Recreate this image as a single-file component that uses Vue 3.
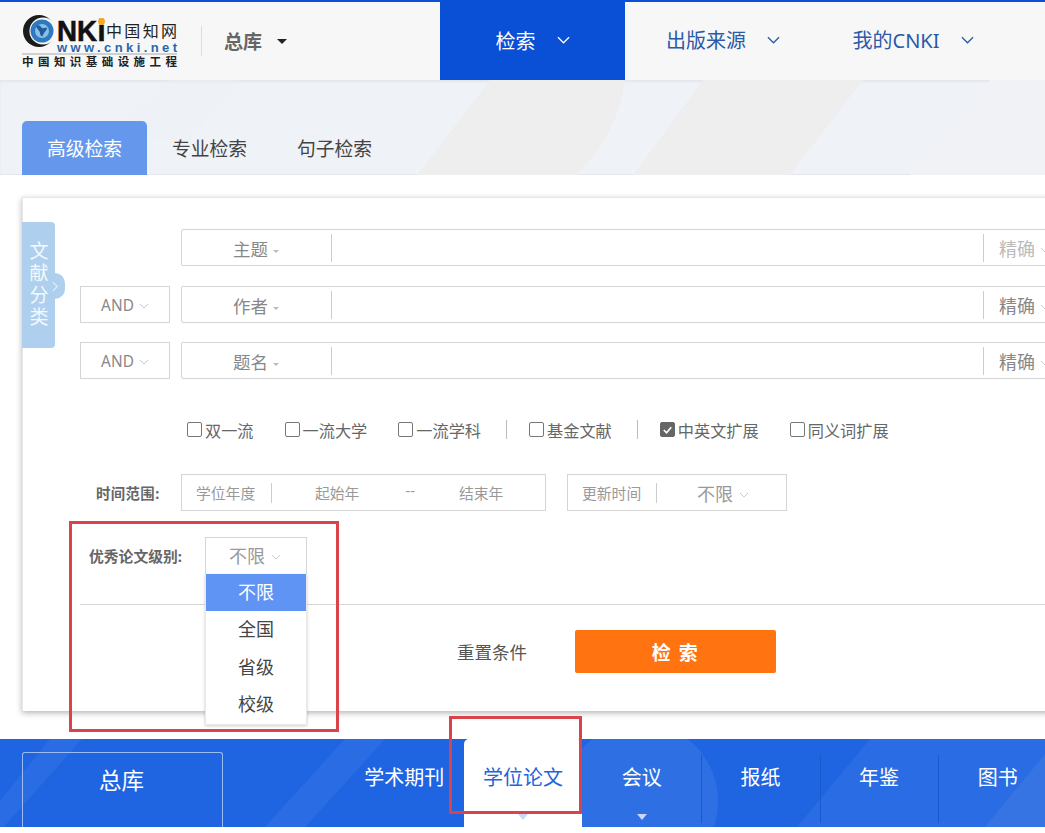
<template>
  <div class="page">
    <header class="topbar">
      <div class="brand">
        <svg class="logo" viewBox="0 0 156 50" width="156" height="50">
          <circle cx="17" cy="14" r="16" fill="#1b1b1b" />
          <circle cx="21" cy="14" r="13.6" fill="#f7f7f7" />
          <circle cx="20" cy="14" r="11.5" fill="#2f79bf" />
          <circle cx="20" cy="14" r="7" fill="#8cbde6" />
          <path d="M14 9c3-2 5 1 6 2s4-1 5 0-3 4-4 7-3 0-3-2-3-4-4-7z" fill="#1e5c9a" />
          <text x="35" y="24" class="logo-nki" textLength="40" lengthAdjust="spacingAndGlyphs">NK</text>
          <text x="75.5" y="24" class="logo-nki">i</text>
          <circle cx="79.5" cy="4.5" r="3.4" fill="#f5a623" />
          <text x="84" y="20" class="logo-cn" textLength="71" lengthAdjust="spacing">中国知网</text>
          <text x="35" y="34.5" class="logo-url" textLength="120" lengthAdjust="spacing">www.cnki.net</text>
          <path d="M0 37H155" stroke="#aaa" stroke-width="1" />
          <text x="0" y="48.5" class="logo-sub" textLength="155" lengthAdjust="spacing">中国知识基础设施工程</text>
        </svg>
        <span class="brand-sep"></span>
        <span class="brand-lib">总库</span>
        <span class="caret"></span>
      </div>
      <nav class="topnav">
        <a v-for="n in topNav" :key="n.text" class="topnav-item" :class="{ on: n.on }" :style="{ width: n.width + 'px' }">
          <span>{{ n.text }}</span>
          <svg viewBox="0 0 14 8" width="13" height="8"><path d="M1 1l6 6 6-6" fill="none" stroke="currentColor" stroke-width="1.4" /></svg>
        </a>
      </nav>
    </header>

    <div class="band">
      <svg class="band-bg" viewBox="0 0 1045 95" width="1045" height="95">
        <path d="M100 60L170 0H240L190 60Z" fill="#edeef0" opacity="0.4" />
        <path d="M417 95L490 0H625Q620 50 577 95Z" fill="#eeeeef" />
        <path d="M633 95L703 0H863L790 95Z" fill="#eeeeef" />
        <path d="M910 95L923 75L990 0H1045V95Z" fill="#f0f2f5" />
      </svg>
      <div v-for="(t, i) in tabs" :key="t" class="tab" :class="{ on: i === 0 }">{{ t }}</div>
    </div>

    <main class="main">
      <section class="card">
        <div class="side-tab">
          <span class="side-text">文献分类</span>
          <i class="side-knob"><svg viewBox="0 0 8 12" width="7" height="11"><path d="M1 1l5 5-5 5" fill="none" stroke="#dcebf8" stroke-width="1.5" /></svg></i>
        </div>

        <div class="rows">
          <div v-for="(r, i) in rows" :key="r.field" class="row">
            <div v-if="i > 0" class="logic">AND<svg class="chev" viewBox="0 0 10 6" width="10" height="6"><path d="M1 1l4 4 4-4" fill="none" stroke="#ccc" /></svg></div>
            <div class="field">
              <div class="field-name">{{ r.field }}<i class="mini-caret"></i></div>
              <div class="field-input"></div>
              <div class="field-match" :class="{ dim: i === 0 }">精确<svg class="chev" viewBox="0 0 10 6" width="10" height="6"><path d="M1 1l4 4 4-4" fill="none" stroke="#ccc" /></svg></div>
            </div>
          </div>
        </div>

        <div class="checks">
          <template v-for="c in checks" :key="c.text">
            <i v-if="c.sep" class="check-sep"></i>
            <label class="check">
              <span class="box" :class="{ checked: c.on }">
                <svg v-if="c.on" viewBox="0 0 14 14" width="14" height="14"><path d="M3 7l3 3 5-6" fill="none" stroke="#fff" stroke-width="1.8" /></svg>
              </span>
              {{ c.text }}
            </label>
          </template>
        </div>

        <div class="time-row">
          <span class="label">时间范围:</span>
          <div class="time-box">
            <span class="time-type">学位年度</span>
            <span class="time-start">起始年</span>
            <span class="time-dash">--</span>
            <span class="time-end">结束年</span>
          </div>
          <div class="update-box">
            <span class="time-type">更新时间</span>
            <span class="update-val">不限<svg class="chev" viewBox="0 0 10 6" width="10" height="6"><path d="M1 1l4 4 4-4" fill="none" stroke="#ccc" /></svg></span>
          </div>
        </div>

        <div class="level-row">
          <span class="level-label">优秀论文级别:</span>
          <div class="level-select">
            <div class="level-val">不限<svg class="chev" viewBox="0 0 10 6" width="10" height="6"><path d="M1 1l4 4 4-4" fill="none" stroke="#ccc" /></svg></div>
            <ul class="level-menu">
              <li v-for="(o, i) in levels" :key="o" :class="{ on: i === 0 }">{{ o }}</li>
            </ul>
          </div>
        </div>

        <div class="actions">
          <span class="reset">重置条件</span>
          <button class="search-btn">检 索</button>
        </div>
      </section>
    </main>

    <footer class="dbbar">
      <svg class="db-bg" viewBox="0 0 1045 88" width="1045" height="88">
        <path d="M0 62L50 0H82L0 92Z" fill="#fff" opacity="0.05" />
        <path d="M265 88L345 0H385L305 88Z" fill="#fff" opacity="0.05" />
        <circle cx="640" cy="62" r="78" fill="#fff" opacity="0.07" />
        <path d="M797 88L870 0H1045V88Z" fill="#fff" opacity="0.05" />
        <path d="M985 88L1045 15V88Z" fill="#fff" opacity="0.06" />
      </svg>
      <div class="db-all">总库</div>
      <div class="db-list">
        <div v-for="d in dbs" :key="d.text" class="db-item" :class="{ on: d.on, line: d.line }">
          {{ d.text }}
          <i v-if="d.arrow" class="db-arrow"></i>
        </div>
      </div>
    </footer>

    <div class="mark mark-level"></div>
    <div class="mark mark-tab"></div>
  </div>
</template>

<script setup>
const topNav = [
  { text: '检索', on: true, width: 185 },
  { text: '出版来源', width: 196 },
  { text: '我的CNKI', width: 184 }
]
const tabs = ['高级检索', '专业检索', '句子检索']
const rows = [{ field: '主题' }, { field: '作者' }, { field: '题名' }]
const checks = [
  { text: '双一流' },
  { text: '一流大学' },
  { text: '一流学科' },
  { text: '基金文献', sep: true },
  { text: '中英文扩展', sep: true, on: true },
  { text: '同义词扩展' }
]
const levels = ['不限', '全国', '省级', '校级']
const dbs = [
  { text: '学术期刊' },
  { text: '学位论文', on: true, arrow: true },
  { text: '会议', arrow: true },
  { text: '报纸', line: true },
  { text: '年鉴', line: true },
  { text: '图书', line: true }
]
</script>

<style>
html, body { margin: 0; background: #fff; }
</style>

<style scoped>
.page {
  position: relative;
  width: 1045px;
  height: 833px;
  overflow: hidden;
  background: #fff;
  color: #333;
  font-family: "Noto Sans", "Noto Sans CJK SC", sans-serif;
}

/* top */
.topbar { position: relative; z-index: 1; display: flex; height: 78px; border-top: 2px solid #0a50d6; background: #f7f7f7; }
.brand { display: flex; align-items: center; width: 418px; padding-left: 22px; }
.logo { flex: none; width: 156px; margin-top: 1px; overflow: visible; }
.logo-nki { font: 700 29px "Liberation Sans", sans-serif; fill: #111; stroke: #111; stroke-width: 0.6px; }
.logo-cn { font: 16px "Noto Sans CJK SC", sans-serif; fill: #222; }
.logo-url { font: 700 13px "Liberation Sans", sans-serif; fill: #2a66ab; }
.logo-sub { font: 700 11.5px "Noto Sans CJK SC", sans-serif; fill: #222; }
.brand-sep { width: 1px; height: 30px; background: #ddd; margin: 0 22px 0 23px; }
.brand-lib { font-size: 19px; font-weight: 700; color: #666; }
.caret { margin-left: 15px; border: 5px solid transparent; border-top-color: #222; border-bottom: 0; }
.topnav { display: flex; }
.topnav-item { display: flex; align-items: center; justify-content: center; gap: 21px; padding-bottom: 3px; box-sizing: border-box; font-size: 20px; color: #2a5aa8; }
.topnav-item.on { background: #0a50d6; color: #fff; margin-top: -2px; padding-bottom: 0; }

/* tabs */
.band {
  position: relative;
  display: flex;
  align-items: flex-end;
  height: 95px;
  box-sizing: border-box;
  padding-left: 22px;
  background: #eff3f8;
  box-shadow: inset 0 -1px 0 #e4e6ea, inset 0 2px 3px rgba(0, 0, 0, 0.05);
}
.band-bg { position: absolute; left: 0; top: 0; }
.tab { position: relative; width: 125px; height: 54px; line-height: 56px; text-align: center; font-size: 18.8px; color: #444; }
.tab.on { background: #6598ec; color: #fff; border-radius: 5px 5px 0 0; }

/* form */
.main { padding: 22px 0 28px 22px; height: 564px; box-sizing: border-box; }
.card {
  position: relative;
  width: 1100px;
  height: 514px;
  box-sizing: border-box;
  padding: 31px 0 0 57px;
  background: #fff;
  border-top: 1px solid #e8e8e8;
  border-left: 1px solid #e8e8e8;
  box-shadow: 0 2px 6px rgba(0, 0, 0, 0.3);
}
.side-tab {
  position: absolute;
  left: -1px;
  top: 24px;
  display: flex;
  align-items: center;
  justify-content: center;
  width: 33px;
  height: 126px;
  background: #aed0ee;
  border-radius: 0 4px 4px 0;
  color: #f4f9fd;
}
.side-text { writing-mode: vertical-rl; font-size: 19px; letter-spacing: 3px; line-height: 33px; margin-right: 3px; }
.side-knob {
  position: absolute;
  right: -10px;
  top: 51px;
  display: flex;
  align-items: center;
  width: 10px;
  height: 26px;
  background: #aed0ee;
  border-radius: 0 13px 13px 0;
}
.side-knob svg { margin-left: -3px; }
.rows { display: flex; flex-direction: column; gap: 20px; }
.row { display: flex; justify-content: flex-end; gap: 11px; width: 1021px; height: 37px; }
.row:last-child { margin-top: -1px; }
.logic {
  width: 90px;
  box-sizing: border-box;
  border: 1px solid #d5d5d5;
  display: flex;
  align-items: center;
  justify-content: center;
  gap: 5px;
  padding-top: 2px;
  font-size: 15.4px;
  color: #888;
}
.field {
  display: flex;
  align-items: center;
  width: 920px;
  box-sizing: border-box;
  border: 1px solid #d5d5d5;
  border-radius: 2px;
}
.field-name {
  width: 150px;
  height: 28px;
  line-height: 30px;
  box-sizing: border-box;
  border-right: 1px solid #ccc;
  padding-left: 51px;
  font-size: 17.5px;
  color: #888;
}
.mini-caret {
  display: inline-block;
  margin-left: 5px;
  vertical-align: 3px;
  border: 3.5px solid transparent;
  border-top-color: #bbb;
  border-bottom: 0;
}
.field-input { flex: 1; }
.field-match {
  width: 117px;
  height: 28px;
  line-height: 30px;
  box-sizing: border-box;
  border-left: 1px solid #ccc;
  padding-left: 15px;
  font-size: 18px;
  color: #888;
}
.field-match .chev { margin-left: 5px; vertical-align: 3px; }
.field-match.dim { color: #bbb; }

.checks { display: flex; align-items: center; height: 21px; margin: 40px 0 0 107px; font-size: 16.2px; color: #666; white-space: nowrap; }
.check { display: flex; align-items: center; gap: 3px; margin-right: 31px; }
.box { width: 15px; height: 15px; box-sizing: border-box; border: 1px solid #777; border-radius: 2px; display: flex; }
.box.checked { background: #666; border-color: #666; }
.check-sep { width: 1px; height: 19px; background: #bbb; margin: 0 22px 0 -6px; }

.time-row { display: flex; align-items: center; height: 37px; margin-top: 34px; }
.label { width: 101px; padding-left: 16px; box-sizing: border-box; font-size: 14.4px; letter-spacing: 0.4px; font-weight: 700; color: #666; white-space: nowrap; }
.time-box, .update-box {
  display: flex;
  align-items: center;
  box-sizing: border-box;
  height: 37px;
  border: 1px solid #d5d5d5;
  font-size: 14.8px;
  color: #999;
}
.time-box { width: 365px; }
.update-box { width: 220px; margin-left: 21px; }
.time-type { width: 90px; padding-left: 14px; box-sizing: border-box; position: relative; flex: none; }
.time-type::after { content: ""; position: absolute; right: 0; top: 1px; height: 20px; width: 1px; background: #ccc; }
.time-start { margin-left: 43px; }
.time-dash { margin: -6px 0 0 46px; }
.time-end { margin-left: 44px; }
.update-box .time-type { width: 89px; }
.update-val { margin-left: 40px; font-size: 18px; }
.update-val .chev { margin-left: 6px; vertical-align: 3px; }

.level-row { display: flex; align-items: flex-start; height: 67px; margin-top: 26px; border-bottom: 1px solid #d8d8d8; }
.level-label { width: 125px; padding: 8px 0 0 9px; box-sizing: border-box; font-size: 14.8px; font-weight: 700; color: #666; white-space: nowrap; }
.level-select { position: relative; width: 102px; z-index: 2; }
.level-val {
  height: 37px;
  line-height: 37px;
  box-sizing: border-box;
  border: 1px solid #d5d5d5;
  border-bottom: 0;
  padding-left: 23px;
  font-size: 18px;
  color: #999;
  background: #fff;
}
.level-val .chev { margin-left: 6px; vertical-align: 3px; }
.level-menu {
  position: absolute;
  left: 0;
  top: 37px;
  width: 102px;
  box-sizing: border-box;
  margin: 0;
  padding: 0 0 1px;
  list-style: none;
  background: #fff;
  border: 1px solid #e8e8e8;
  border-top: 0;
  box-shadow: 0 1px 3px rgba(0, 0, 0, 0.2);
}
.level-menu li { height: 37.3px; line-height: 37px; text-align: center; font-size: 18px; color: #444; }
.level-menu li.on { background: #5f94f5; color: #fff; }

.actions { display: flex; align-items: center; margin: 25px 0 0 377px; }
.reset { width: 118px; font-size: 17.5px; color: #555; }
.search-btn {
  width: 201px;
  height: 43px;
  border: 0;
  border-radius: 2px;
  background: #ff7311;
  color: #fff;
  font: 700 19px "Noto Sans", "Noto Sans CJK SC", sans-serif;
  letter-spacing: 1.5px;
}

/* database bar */
.dbbar {
  position: relative;
  display: flex;
  align-items: flex-end;
  height: 88px;
  box-sizing: border-box;
  padding-left: 22px;
  background: #1f65e2;
}
.db-bg { position: absolute; left: 0; top: 0; }
.db-all {
  position: relative;
  flex: none;
  width: 201px;
  height: 75px;
  box-sizing: border-box;
  border: 1px solid #9dbcf2;
  border-bottom: 0;
  border-radius: 3px 3px 0 0;
  text-align: center;
  padding: 10px 2px 0 0;
  line-height: 36px;
  font-size: 22.5px;
  color: #fff;
}
.db-list { position: relative; display: flex; flex: none; align-self: stretch; margin-left: 122px; }
.db-item {
  position: relative;
  width: 118.7px;
  padding-top: 21px;
  line-height: 36px;
  text-align: center;
  font-size: 20px;
  color: #fff;
  box-sizing: border-box;
}
.db-item.line::before { content: ""; position: absolute; left: 0; top: 16px; bottom: 4px; width: 1px; background: #175ac9; }
.db-item.on { height: 94px; background: #fff; color: #2563d8; border-radius: 5px 5px 0 0; }
.db-arrow {
  position: absolute;
  left: 50%;
  top: 75px;
  margin-left: -5px;
  border: 5px solid transparent;
  border-top: 6px solid #c9d8fa;
  border-bottom: 0;
}

/* red annotation boxes */
.mark { position: absolute; box-sizing: border-box; border: 3px solid #d9434a; z-index: 5; }
.mark-level { left: 69px; top: 521px; width: 270px; height: 211px; }
.mark-tab { left: 449px; top: 716px; width: 133px; height: 98px; }
</style>
